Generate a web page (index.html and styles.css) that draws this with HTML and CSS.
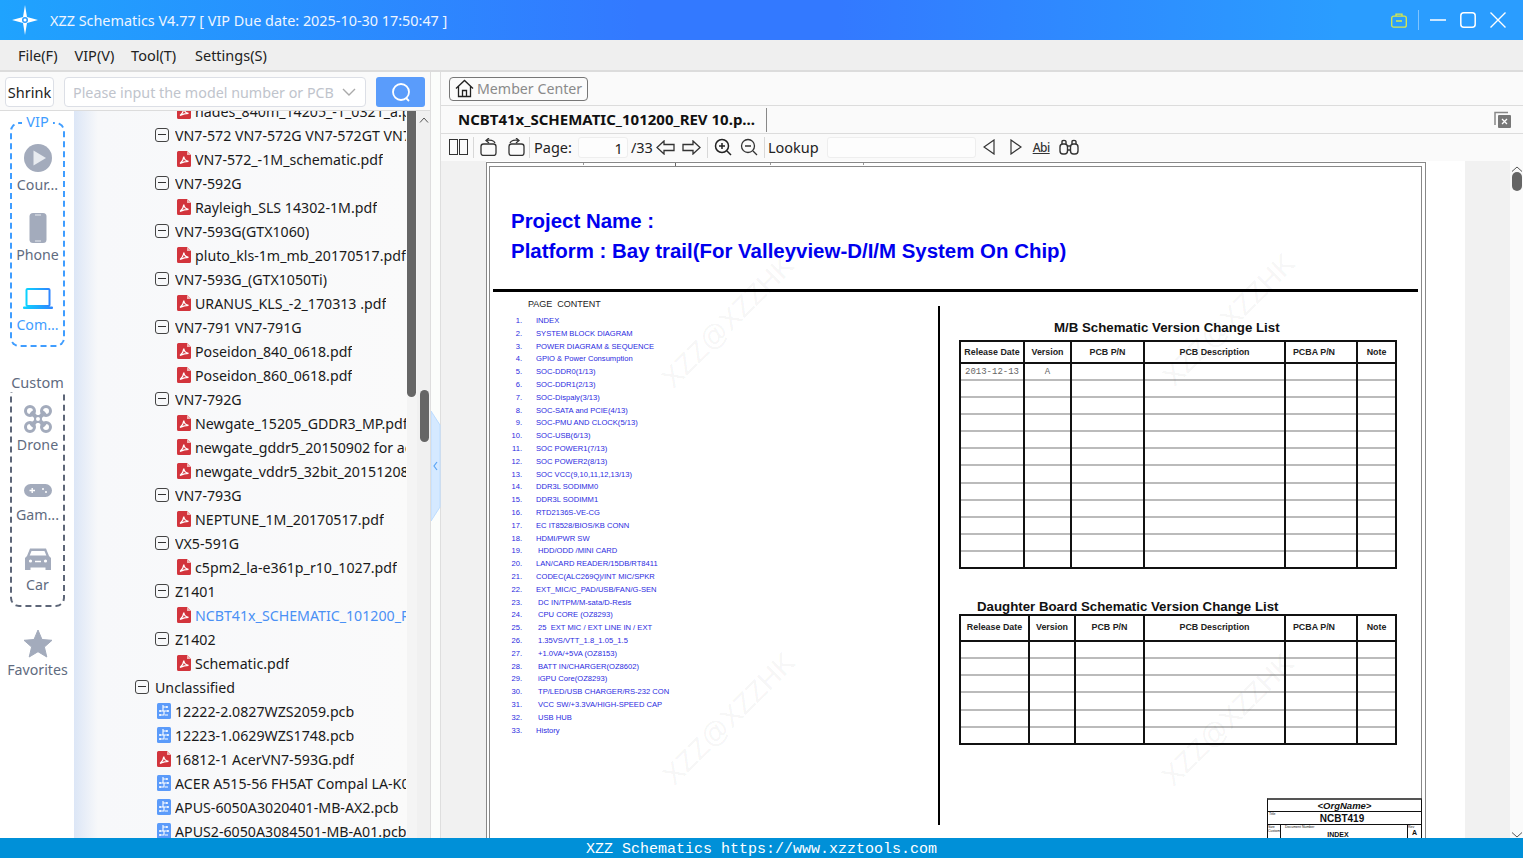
FILE: index.html
```html
<!DOCTYPE html>
<html lang="en">
<head>
<meta charset="utf-8">
<title>XZZ Schematics</title>
<link rel="stylesheet" href="styles.css">
</head>
<body>
<svg class="defs" width="0" height="0" aria-hidden="true">
  <symbol id="pdf" viewBox="0 0 14 16">
    <path d="M1.5 0H10L14 4V14.5A1.5 1.5 0 0 1 12.500 16H1.500A1.500 1.500 0 0 1 0 14.500V1.500A1.500 1.500 0 0 1 1.500 0Z" fill="#d2343c"/>
    <path d="M10 0V4H14Z" fill="#f2b5b5"/>
    <path d="M3 12.500C5 11 6.500 8 6.800 5.500C7.200 8.500 9 10 11.500 10.300C9 10.300 6 11 3 12.500Z" fill="none" stroke="#fff" stroke-width="1.200"/>
  </symbol>
  <symbol id="pcb" viewBox="0 0 14 16">
    <rect width="14" height="16" rx="1.500" fill="#5b9bfa"/>
    <path d="M3 8H6V4H10M3 12H7V8H11M8 12H11M6 4V2" fill="none" stroke="#fff" stroke-width="1.100"/>
    <circle cx="3" cy="8" r="1" fill="#fff"/><circle cx="11" cy="8" r="1" fill="#fff"/><circle cx="10" cy="4" r="1" fill="#fff"/><circle cx="3" cy="12" r="1" fill="#fff"/>
  </symbol>
</svg>
<div class="app">
  <header class="titlebar">
    <svg class="logo" width="26" height="30" viewBox="0 0 26 30"><path d="M13 0L15 12L26 15L15 18L13 30L11 18L0 15L11 12Z" fill="#fff"/><circle cx="13" cy="15" r="3" fill="#2b9dff"/><circle cx="13" cy="15" r="1.500" fill="#fff"/></svg>
    <div class="app-title">XZZ Schematics V4.77 [ VIP Due date: 2025-10-30 17:50:47 ]</div>
    <div class="win-controls">
      <svg width="16" height="15" viewBox="0 0 16 15" fill="none" stroke="#d9e84a" stroke-width="1.300"><rect x=".7" y="3.200" width="14.600" height="11" rx="2"/><path d="M5 3V1.200H11V3M5 8H11"/></svg>
      <span class="win-sep"></span>
      <svg class="win-min" width="16" height="16" viewBox="0 0 16 16"><path d="M0 8H16" stroke="#fff" stroke-width="1.500"/></svg>
      <svg width="16" height="16" viewBox="0 0 16 16" fill="none"><rect x=".8" y=".8" width="14.400" height="14.400" rx="3" stroke="#fff" stroke-width="1.500"/></svg>
      <svg width="16" height="16" viewBox="0 0 16 16"><path d="M.5 .5L15.500 15.500M15.500 .5L.5 15.500" stroke="#fff" stroke-width="1.400"/></svg>
    </div>
  </header>
  <nav class="menubar">
    <span>File(F)</span><span>VIP(V)</span><span>Tool(T)</span><span class="menu-last">Settings(S)</span>
  </nav>
  <main class="workspace">
    <section class="left-panel">
      <div class="search-row">
        <button class="shrink">Shrink</button>
        <div class="search-input"><span>Please input the model number or PCB</span>
          <svg width="14" height="8" viewBox="0 0 14 8" fill="none"><path d="M1 1L7 7L13 1" stroke="#aaa" stroke-width="1.400"/></svg>
        </div>
        <button class="search-btn"><svg width="20" height="20" viewBox="0 0 20 20" fill="none" stroke="#fff" stroke-width="1.800"><circle cx="10" cy="10" r="8"/><path d="M15 16L18 19"/></svg></button>
      </div>
      <div class="left-body">
        <aside class="rail">
          <div class="group group-vip">
            <div class="group-label">VIP</div>
            <div class="rail-item"><svg width="30" height="30" viewBox="0 0 30 30"><circle cx="15" cy="15" r="14" fill="#a3abbc"/><path d="M10.500 7.500L23 15L10.500 22.500Z" fill="#e8ebf0"/></svg><span>Cour...</span></div>
            <div class="rail-item"><svg width="30" height="30" viewBox="0 0 30 30"><rect x="6.500" y="0" width="17" height="30" rx="3.500" fill="#a3abbc"/><path d="M12 2H18M12 28H18" stroke="#e8ebf0"/></svg><span>Phone</span></div>
            <div class="rail-item active"><svg width="30" height="30" viewBox="0 0 30 30" fill="none"><defs><linearGradient id="lap" x1="0" x2="1"><stop offset="0" stop-color="#0cd2ff"/><stop offset="1" stop-color="#2f86ff"/></linearGradient></defs><rect x="3.500" y="6" width="23" height="17" rx="1" stroke="url(#lap)" stroke-width="2"/><rect x="0" y="23.500" width="30" height="2.500" rx="1" fill="url(#lap)"/></svg><span>Com...</span></div>
          </div>
          <div class="group group-custom">
            <div class="group-label">Custom</div>
            <div class="rail-item"><svg width="30" height="30" viewBox="0 0 30 30" fill="none" stroke="#a3abbc"><path d="M8 8L22 22M22 8L8 22" stroke-width="4"/><circle cx="7" cy="7" r="4.500" stroke-width="3"/><circle cx="23" cy="7" r="4.500" stroke-width="3"/><circle cx="7" cy="23" r="4.500" stroke-width="3"/><circle cx="23" cy="23" r="4.500" stroke-width="3"/><circle cx="15" cy="15" r="3" fill="#fff" stroke-width="2"/></svg><span>Drone</span></div>
            <div class="rail-item"><svg width="30" height="30" viewBox="0 0 30 30"><rect x="1" y="10" width="28" height="13" rx="6.500" fill="#a3abbc"/><path d="M6.500 16.500H12M9.200 14V19" stroke="#fff" stroke-width="1.400"/><circle cx="20" cy="15" r="1" fill="#fff"/><circle cx="23" cy="18" r="1" fill="#fff"/></svg><span>Gam...</span></div>
            <div class="rail-item"><svg width="30" height="30" viewBox="0 0 30 30"><path d="M7 4.500H23L26 12L28 14V26H22.500V23.500H7.500V26H2V14L4 12Z" fill="#a3abbc"/><path d="M8.500 7H21.500L23.300 11.500H6.700Z" fill="#fff"/><circle cx="7.500" cy="17" r="1.600" fill="#fff"/><circle cx="22.500" cy="17" r="1.600" fill="#fff"/><path d="M12 17.500H18" stroke="#fff" stroke-width="1.500"/></svg><span>Car</span></div>
          </div>
          <div class="rail-item favorites"><svg width="30" height="30" viewBox="0 0 30 30"><path d="M15 1L19 10.500L29 11.300L21.400 18L23.800 28L15 22.700L6.200 28L8.600 18L1 11.300L11 10.500Z" fill="#a3abbc" stroke="#a3abbc" stroke-linejoin="round"/></svg><span>Favorites</span></div>
        </aside>
        <div class="tree">
          <div class="tree-list">
            <div class="row l2"><svg class="file"><use href="#pdf"/></svg><span>hades_840m_14205_-1_0321_a.pdf</span></div>
            <div class="row l1"><i class="box"></i><span>VN7-572 VN7-572G VN7-572GT VN7-572TG</span></div>
            <div class="row l2"><svg class="file"><use href="#pdf"/></svg><span>VN7-572_-1M_schematic.pdf</span></div>
            <div class="row l1"><i class="box"></i><span>VN7-592G</span></div>
            <div class="row l2"><svg class="file"><use href="#pdf"/></svg><span>Rayleigh_SLS 14302-1M.pdf</span></div>
            <div class="row l1"><i class="box"></i><span>VN7-593G(GTX1060)</span></div>
            <div class="row l2"><svg class="file"><use href="#pdf"/></svg><span>pluto_kls-1m_mb_20170517.pdf</span></div>
            <div class="row l1"><i class="box"></i><span>VN7-593G_(GTX1050Ti)</span></div>
            <div class="row l2"><svg class="file"><use href="#pdf"/></svg><span>URANUS_KLS_-2_170313 .pdf</span></div>
            <div class="row l1"><i class="box"></i><span>VN7-791 VN7-791G</span></div>
            <div class="row l2"><svg class="file"><use href="#pdf"/></svg><span>Poseidon_840_0618.pdf</span></div>
            <div class="row l2"><svg class="file"><use href="#pdf"/></svg><span>Poseidon_860_0618.pdf</span></div>
            <div class="row l1"><i class="box"></i><span>VN7-792G</span></div>
            <div class="row l2"><svg class="file"><use href="#pdf"/></svg><span>Newgate_15205_GDDR3_MP.pdf</span></div>
            <div class="row l2"><svg class="file"><use href="#pdf"/></svg><span>newgate_gddr5_20150902 for acer.pdf</span></div>
            <div class="row l2"><svg class="file"><use href="#pdf"/></svg><span>newgate_vddr5_32bit_20151208.pdf</span></div>
            <div class="row l1"><i class="box"></i><span>VN7-793G</span></div>
            <div class="row l2"><svg class="file"><use href="#pdf"/></svg><span>NEPTUNE_1M_20170517.pdf</span></div>
            <div class="row l1"><i class="box"></i><span>VX5-591G</span></div>
            <div class="row l2"><svg class="file"><use href="#pdf"/></svg><span>c5pm2_la-e361p_r10_1027.pdf</span></div>
            <div class="row l1"><i class="box"></i><span>Z1401</span></div>
            <div class="row l2 selected"><svg class="file"><use href="#pdf"/></svg><span>NCBT41x_SCHEMATIC_101200_REV 10.pdf</span></div>
            <div class="row l1"><i class="box"></i><span>Z1402</span></div>
            <div class="row l2"><svg class="file"><use href="#pdf"/></svg><span>Schematic.pdf</span></div>
            <div class="row l0"><i class="box"></i><span>Unclassified</span></div>
            <div class="row l1f"><svg class="file"><use href="#pcb"/></svg><span>12222-2.0827WZS2059.pcb</span></div>
            <div class="row l1f"><svg class="file"><use href="#pcb"/></svg><span>12223-1.0629WZS1748.pcb</span></div>
            <div class="row l1f"><svg class="file"><use href="#pdf"/></svg><span>16812-1 AcerVN7-593G.pdf</span></div>
            <div class="row l1f"><svg class="file"><use href="#pcb"/></svg><span>ACER A515-56 FH5AT Compal LA-K091P.pcb</span></div>
            <div class="row l1f"><svg class="file"><use href="#pcb"/></svg><span>APUS-6050A3020401-MB-AX2.pcb</span></div>
            <div class="row l1f"><svg class="file"><use href="#pcb"/></svg><span>APUS2-6050A3084501-MB-A01.pcb</span></div>
          </div>
        </div>
        <div class="tree-bar"><div class="tree-thumb"></div></div>
        <div class="outer-bar">
          <svg class="chev" width="10" height="6" viewBox="0 0 10 6" fill="none"><path d="M1 5.500L5 1L9 5.500" stroke="#555"/></svg>
          <div class="outer-thumb"></div>
        </div>
      </div>
    </section>
    <div class="splitter">
      <svg width="10" height="110" viewBox="0 0 10 110"><path d="M0 0L9 14V96L0 110Z" fill="#d5e9ff" stroke="#bcdcff"/><path d="M6 51L3 55L6 59" fill="none" stroke="#5aa5f5" stroke-width="1.200"/></svg>
    </div>
    <section class="right-panel">
      <div class="member-row">
        <button class="member">
          <svg width="19" height="19" viewBox="0 0 19 19" fill="none" stroke="#222" stroke-width="1.300"><path d="M1 9.500L9.500 1.500L18 9.500M3.500 7.500V17.500H15.500V7.500M7.500 17.500V11.500H11.500V17.500"/></svg>
          <span>Member Center</span>
        </button>
      </div>
      <div class="tab-row">
        <div class="tab">NCBT41x_SCHEMATIC_101200_REV 10.p...</div>
        <svg class="close-all" width="18" height="18" viewBox="0 0 18 18"><path d="M1 14V1.500H14" fill="none" stroke="#888" stroke-width="1.500"/><rect x="4" y="4" width="13" height="13" rx="1" fill="#777"/><path d="M8 8L13 13M13 8L8 13" stroke="#fff" stroke-width="1.300"/></svg>
      </div>
      <div class="toolbar">
        <svg class="t-split" width="19" height="16" viewBox="0 0 19 16" fill="none" stroke="#333"><rect x=".5" y=".5" width="8" height="15"/><rect x="10.500" y=".5" width="8" height="15"/></svg>
        <i class="t-sep"></i>
        <svg class="t-rot" width="18" height="18" viewBox="0 0 18 18" fill="none" stroke="#333" stroke-width="1.300"><rect x="1" y="6" width="15" height="11.500" rx="2.500"/><path d="M15 5C14 2.500 10 1.500 6.500 2.500M9 0L6 2.500L9 5"/></svg>
        <svg class="t-rot2" width="19" height="18" viewBox="0 0 19 18" fill="none" stroke="#333" stroke-width="1.300"><rect x="3" y="6" width="15" height="11.500" rx="2.500"/><path d="M4 5C5 2.500 9 1.500 12.500 2.500M10 0L13 2.500L10 5"/></svg>
        <i class="t-sep"></i>
        <span class="t-label t-page">Page:</span>
        <div class="page-input">1</div>
        <span class="t-label t-total">/33</span>
        <svg class="t-arrow" width="19" height="15" viewBox="0 0 19 15" fill="none" stroke="#333" stroke-width="1.300"><path d="M8 1L1 7.500L8 14V10.500H18V4.500H8Z"/></svg>
        <svg class="t-arrow2" width="19" height="15" viewBox="0 0 19 15" fill="none" stroke="#333" stroke-width="1.300"><path d="M11 1L18 7.500L11 14V10.500H1V4.500H11Z"/></svg>
        <i class="t-sep"></i>
        <svg class="t-zoom" width="18" height="18" viewBox="0 0 18 18" fill="none" stroke="#222" stroke-width="1.500"><circle cx="8" cy="8" r="6.500"/><path d="M13 13L17 17M5 8H11M8 5V11"/></svg>
        <svg class="t-zoom2" width="18" height="18" viewBox="0 0 18 18" fill="none" stroke="#333" stroke-width="1.300"><circle cx="8" cy="8" r="6.500"/><path d="M13 13L17 17M5 8H11"/></svg>
        <i class="t-sep"></i>
        <span class="t-label t-lookup">Lookup</span>
        <div class="lookup-input"></div>
        <svg class="t-tri" width="12" height="16" viewBox="0 0 12 16" fill="none" stroke="#333" stroke-width="1.200"><path d="M11 1V15L1 8Z"/></svg>
        <svg class="t-tri2" width="12" height="16" viewBox="0 0 12 16" fill="none" stroke="#333" stroke-width="1.200"><path d="M1 1V15L11 8Z"/></svg>
        <span class="t-abi">Abi</span>
        <svg width="20" height="16" viewBox="0 0 20 16" fill="none" stroke="#333" stroke-width="1.400"><rect x="1" y="5" width="7.500" height="10" rx="3"/><rect x="11.500" y="5" width="7.500" height="10" rx="3"/><path d="M3 5V2.500C3 1 7 1 7 2.500V5M13 5V2.500C13 1 17 1 17 2.500V5M8.500 7H11.500M8.500 11H11.500"/></svg>
      </div>
      <div class="viewer">
        <article class="page">
          <div class="frame-outer">
            <div class="frame-inner">
              <h1 class="sheet-title">Project Name :<br>Platform : Bay trail(For Valleyview-D/I/M System On Chip)</h1>
              <div class="sheet-rule"></div>
              <div class="sheet-body">
                <div class="toc">
                  <div class="toc-head">PAGE&nbsp;&nbsp;CONTENT</div>
                  <ol class="toc-list">
                    <li>INDEX</li><li>SYSTEM BLOCK DIAGRAM</li><li>POWER DIAGRAM &amp; SEQUENCE</li><li>GPIO &amp; Power Consumption</li><li>SOC-DDR0(1/13)</li><li>SOC-DDR1(2/13)</li><li>SOC-Dispaly(3/13)</li><li>SOC-SATA and PCIE(4/13)</li><li>SOC-PMU AND CLOCK(5/13)</li><li>SOC-USB(6/13)</li><li>SOC POWER1(7/13)</li><li>SOC POWER2(8/13)</li><li>SOC VCC(9,10,11,12,13/13)</li><li>DDR3L SODIMM0</li><li>DDR3L SODIMM1</li><li>RTD2136S-VE-CG</li><li>EC IT8528/BIOS/KB CONN</li><li>HDMI/PWR SW</li><li class="in">HDD/ODD /MINI CARD</li><li>LAN/CARD READER/15DB/RT8411</li><li>CODEC(ALC269Q)/INT MIC/SPKR</li><li>EXT_MIC/C_PAD/USB/FAN/G-SEN</li><li class="in">DC IN/TPM/M-sata/D-Resis</li><li class="in">CPU CORE (OZ8293)</li><li class="in">25&nbsp; EXT MIC / EXT LINE IN / EXT</li><li class="in">1.35VS/VTT_1.8_1.05_1.5</li><li class="in">+1.0VA/+5VA (OZ8153)</li><li class="in">BATT IN/CHARGER(OZ8602)</li><li class="in">iGPU Core(OZ8293)</li><li class="in">TP/LED/USB CHARGER/RS-232 CON</li><li class="in">VCC SW/+3.3VA/HIGH-SPEED CAP</li><li class="in">USB HUB</li><li>History</li>
                  </ol>
                </div>
                <div class="sheet-divider"></div>
                <div class="versions">
                  <h2 class="ver-title first">M/B Schematic Version Change List</h2>
                  <table class="ver-table mb">
                    <colgroup><col class="c1"><col class="c2"><col class="c3"><col class="c4"><col class="c5"><col class="c6"></colgroup>
                    <thead><tr><th>Release Date</th><th>Version</th><th>PCB P/N</th><th>PCB Description</th><th class="pcba">PCBA P/N</th><th>Note</th></tr></thead>
                    <tbody>
                      <tr><td class="typed">2013-12-13</td><td class="typed">A</td><td></td><td></td><td></td><td></td></tr>
                      <tr><td></td><td></td><td></td><td></td><td></td><td></td></tr>
                      <tr><td></td><td></td><td></td><td></td><td></td><td></td></tr>
                      <tr><td></td><td></td><td></td><td></td><td></td><td></td></tr>
                      <tr><td></td><td></td><td></td><td></td><td></td><td></td></tr>
                      <tr><td></td><td></td><td></td><td></td><td></td><td></td></tr>
                      <tr><td></td><td></td><td></td><td></td><td></td><td></td></tr>
                      <tr><td></td><td></td><td></td><td></td><td></td><td></td></tr>
                      <tr><td></td><td></td><td></td><td></td><td></td><td></td></tr>
                      <tr><td></td><td></td><td></td><td></td><td></td><td></td></tr>
                      <tr><td></td><td></td><td></td><td></td><td></td><td></td></tr>
                      <tr><td></td><td></td><td></td><td></td><td></td><td></td></tr>
                    </tbody>
                  </table>
                  <h2 class="ver-title second">Daughter Board Schematic Version Change List</h2>
                  <table class="ver-table db">
                    <colgroup><col class="d1"><col class="d2"><col class="d3"><col class="c4"><col class="c5"><col class="c6"></colgroup>
                    <thead><tr><th>Release Date</th><th>Version</th><th>PCB P/N</th><th>PCB Description</th><th class="pcba">PCBA P/N</th><th>Note</th></tr></thead>
                    <tbody>
                      <tr><td></td><td></td><td></td><td></td><td></td><td></td></tr>
                      <tr><td></td><td></td><td></td><td></td><td></td><td></td></tr>
                      <tr><td></td><td></td><td></td><td></td><td></td><td></td></tr>
                      <tr><td></td><td></td><td></td><td></td><td></td><td></td></tr>
                      <tr><td></td><td></td><td></td><td></td><td></td><td></td></tr>
                      <tr><td></td><td></td><td></td><td></td><td></td><td></td></tr>
                    </tbody>
                  </table>
                  <div class="title-block">
                    <div class="tb-org">&lt;OrgName&gt;</div>
                    <div class="tb-title"><small>Title</small><b>NCBT419</b></div>
                    <div class="tb-doc">
                      <div class="tb-size"><small>Size<br>Custom</small></div>
                      <div class="tb-num"><small>Document Number</small><b>INDEX</b></div>
                      <div class="tb-rev"><small>Rev</small><b>A</b></div>
                    </div>
                  </div>
                </div>
              </div>
            </div>
          </div>
          <div class="wm wm1">XZZ@XZZHK</div>
          <div class="wm wm2">XZZ@XZZHK</div>
          <div class="wm wm3">XZZ@XZZHK</div>
          <div class="wm wm4">XZZ@XZZHK</div>
        </article>
        <div class="viewer-gap"></div>
        <div class="viewer-bar">
          <svg class="chev" width="12" height="6" viewBox="0 0 12 6" fill="none"><path d="M1 5.500L6 1L11 5.500" stroke="#555"/></svg>
          <div class="viewer-thumb"></div>
          <svg class="chev-down" width="12" height="6" viewBox="0 0 12 6" fill="none"><path d="M1 .5L6 5L11 .5" stroke="#555"/></svg>
        </div>
      </div>
    </section>
  </main>
  <footer class="statusbar">XZZ Schematics https://www.xzztools.com</footer>
</div>
</body>
</html>
```
FILE: styles.css
```css
* { box-sizing: border-box; }
html, body { margin: 0; padding: 0; height: 100%; overflow: hidden; }
body { font-family: "Noto Sans", "Liberation Sans", sans-serif; font-size: 15px; color: #222; background: #fff; }
.defs { position: absolute; }
.app { width: 1523px; height: 858px; display: flex; flex-direction: column; overflow: hidden; }

/* title bar */
.titlebar { height: 40px; flex: none; display: flex; align-items: center; padding: 0 17px 0 12px; color: #fff; background: linear-gradient(90deg, #1fa3fe 0, #3379ff 42%, #3379ff 55%, #2a9dff 88%, #2a9dff 100%); }
.logo { flex: none; }
.app-title { margin-left: 12px; font-size: 14.4px; white-space: nowrap; color: #eef5ff; }
.win-controls { margin-left: auto; display: flex; align-items: center; }
.win-controls svg { display: block; margin-left: 14px; }
.win-sep { width: 1px; height: 20px; background: #7fc4ff; margin: 0 -2px 0 11px; }
.win-controls .win-min { margin-left: 13px; }

/* menu */
.menubar { height: 32px; flex: none; display: flex; gap: 16.8px; align-items: center; padding-left: 18px; background: #efefef; border-bottom: 2px solid #dcdcdc; font-size: 14.5px; color: #222; }
.menu-last { margin-left: 2px; }

.workspace { flex: 1; min-height: 0; display: flex; }

/* left panel */
.left-panel { width: 431px; flex: none; display: flex; flex-direction: column; border-right: 1px solid #dedede; background: #fafafa; }
.search-row { height: 39px; flex: none; display: flex; align-items: flex-start; padding: 5px 0 0 5px; border-bottom: 1px solid #dcdcdc; background: #fafafa; }
.shrink { width: 49px; height: 30px; padding: 0; border: 1px solid #dcdfe6; border-radius: 4px; background: #fff; font: inherit; font-size: 14.5px; color: #222; }
.search-input { width: 302px; height: 30px; margin-left: 10px; padding: 0 9px 0 8px; display: flex; align-items: center; justify-content: space-between; border: 1px solid #dcdfe6; border-radius: 4px; background: #fff; color: #c0c4cc; font-size: 14.3px; white-space: nowrap; overflow: hidden; }
.search-btn { width: 49px; height: 30px; margin-left: 10px; padding: 0; border: 0; border-radius: 3px; background: #5a9cfb; display: flex; align-items: center; justify-content: center; }
.left-body { flex: 1; min-height: 0; display: flex; }

.rail { width: 74px; flex: none; background: #fff; padding: 11px 0 0 10px; color: #5f6b80; font-size: 14.2px; }
.group { width: 55px; border: 2px dashed; border-radius: 9px; text-align: center; }
.group-vip { height: 225px; border-color: #3f9dff; color: #3f9dff; }
.group-custom { height: 222px; margin-top: 38px; border-color: #5d6678; }
.group-label { height: 20px; line-height: 20px; white-space: nowrap; }
.group-vip .group-label { margin: -13px 10px 10px; background: #fff; color: #3f9dff; font-size: 14.5px; }
.group-custom .group-label { margin: -15px -2px 12px; background: #fff; font-size: 14.5px; }
.rail-item { height: 70px; width: 51px; display: flex; flex-direction: column; align-items: center; white-space: nowrap; color: #5f6b80; }
.rail-item svg { flex: none; display: block; }
.rail-item span { line-height: 22px; }
.group-vip .rail-item { padding-top: 2px; }
.group-vip .rail-item span { margin-top: 1px; }
.rail-item.active span { color: #3f9dff; }
.favorites { width: 55px; margin-top: 22px; }

.tree { width: 333px; flex: none; overflow: hidden; background: linear-gradient(90deg, #dce6f6 0, #f7f8fa 24px, #fafafa 100%); }
.tree-list { margin-top: -12px; }
.row { height: 24px; display: flex; align-items: center; white-space: nowrap; padding-right: 1px; font-size: 14.2px; color: #1a1a1a; }
.row span { min-width: 0; overflow: hidden; }
.l0 { padding-left: 61px; }
.l1 { padding-left: 81px; }
.l2 { padding-left: 103px; }
.l1f { padding-left: 83px; }
.box { flex: none; width: 14px; height: 14px; margin-right: 6px; border: 1px solid #444; border-radius: 3px; position: relative; }
.box::after { content: ""; position: absolute; left: 2px; right: 2px; top: 5px; height: 1px; background: #333; }
.file { flex: none; width: 14px; height: 16px; margin-right: 4px; }
.selected { color: #4a90f5; }

.tree-bar { width: 10px; flex: none; background: #f4f4f4; }
.tree-thumb { width: 9px; height: 286px; background: #666; border-radius: 0 0 5px 5px; }
.outer-bar { width: 13px; flex: none; background: #f0f0f0; padding-left: 3px; position: relative; }
.outer-bar .chev { display: block; margin: 6px 0 0 -1px; }
.outer-thumb { width: 9px; height: 52px; margin-top: 267px; background: #666; border-radius: 5px; }

/* splitter */
.splitter { width: 10px; flex: none; background: #fbfdfb; padding-top: 339px; border-right: 1px solid #dedede; }
.splitter svg { display: block; }

/* right */
.right-panel { flex: 1; min-width: 0; display: flex; flex-direction: column; background: #fafafa; }
.member-row { height: 34px; flex: none; padding: 5px 0 0 8px; border-bottom: 1px solid #dcdcdc; }
.member { width: 139px; height: 24px; padding: 0 0 2px 5px; display: flex; align-items: center; gap: 3px; border: 1px solid #777; border-radius: 4px; background: #fbfbfb; font: inherit; font-size: 14.2px; color: #8a8a8a; }
.tab-row { height: 28px; flex: none; display: flex; align-items: center; justify-content: space-between; padding: 0 11px 0 0; border-bottom: 1px solid #dcdcdc; }
.tab { width: 326px; height: 24px; line-height: 22px; padding-left: 17px; font-weight: 700; font-size: 15px; color: #111; border-right: 1px solid #888; white-space: nowrap; }
.toolbar { height: 27px; flex: none; display: flex; align-items: center; padding: 0 0 1px 8px; font-size: 14.5px; }
.toolbar svg { flex: none; display: block; }
.t-sep { width: 1px; height: 21px; background: #d8d8d8; flex: none; }
.t-split { margin-right: 5px; }
.t-rot { margin-left: 6px; }
.toolbar .t-rot2 { margin: 0 4px 0 8px; }
.t-page { margin-left: 4px; }
.page-input { width: 50px; height: 21px; margin-left: 6px; padding-right: 4px; text-align: right; line-height: 21px; background: #fdfdfd; border: 1px solid #eee; border-radius: 3px; }
.t-total { margin-left: 3px; }
.toolbar .t-arrow { margin-left: 3px; }
.toolbar .t-arrow2 { margin: 0 6px 0 7px; }
.toolbar .t-zoom { margin-left: 6px; }
.toolbar .t-zoom2 { margin: 0 6px 0 8px; }
.t-lookup { margin-left: 3px; }
.lookup-input { width: 149px; height: 21px; margin-left: 8px; background: #fdfdfd; border: 1px solid #eee; border-radius: 3px; }
.toolbar .t-tri { margin-left: 7px; }
.toolbar .t-tri2 { margin-left: 15px; }
.t-abi { margin: 0 9px 0 11px; font-size: 12px; font-weight: 500; text-decoration: underline; letter-spacing: -.5px; color: #333; }

/* viewer */
.viewer { flex: 1; min-height: 0; display: flex; background: #f1f1f1; padding-left: 45px; }
.page { width: 979px; height: 100%; flex: none; position: relative; overflow: hidden; background: #fff; padding-top: 1px; }
.frame-outer { width: 940px; height: 690px; padding: 3px 3px 0 2px; border: 1px solid #888; border-bottom: 0;
  background:
    linear-gradient(#999, #999) 96px 0 / 1px 2px no-repeat,
    linear-gradient(#666, #666) 188px 0 / 1px 3px no-repeat,
    linear-gradient(#999, #999) 283px 0 / 1px 2px no-repeat,
    linear-gradient(#999, #999) 376px 0 / 1px 2px no-repeat; }
.frame-inner { height: 100%; border: 1px solid #888; border-bottom: 0; font-family: "Liberation Sans", sans-serif; }
.sheet-title { margin: 0; padding: 39px 0 0 21px; font-size: 20.45px; line-height: 30px; font-weight: 700; color: #0000ee; }
.sheet-rule { height: 3px; margin: 23px 3px 0; background: #000; }
.sheet-body { display: flex; }
.toc { width: 448px; flex: none; padding: 6px 0 0 38px; }
.toc-head { font-size: 9px; line-height: 12px; color: #222; }
.toc-list { margin: 5px 0 0 -38px; padding: 0; list-style: none; counter-reset: toc; }
.toc-list li { counter-increment: toc; height: 12.81px; line-height: 12.81px; padding-left: 46px; position: relative; font-size: 7.6px; color: #2a2ae0; white-space: nowrap; }
.toc-list li::before { content: counter(toc) "."; position: absolute; left: 0; width: 32px; text-align: right; color: #2a2ae0; }
.toc-list li.in { padding-left: 48px; }
.sheet-divider { width: 2px; height: 519px; margin-top: 14px; background: #000; flex: none; }
.versions { flex: 1; min-width: 0; padding: 28px 0 0 19px; }
.ver-title { margin: 0; font-size: 13.27px; line-height: 16px; font-weight: 700; color: #111; white-space: nowrap; }
.ver-title.first { padding-left: 95px; margin-bottom: 4px; }
.ver-title.second { padding-left: 18px; margin-top: 30px; margin-bottom: -1px; }
.ver-table { width: 436px; table-layout: fixed; border-collapse: collapse; border: 2px solid #111; }
.ver-table th { font-size: 8.9px; font-weight: 700; color: #222; border: 2px solid #111; padding: 0 0 1px; white-space: nowrap; }
.ver-table th.pcba { padding-right: 14px; }
.ver-table td { padding: 0; border-left: 2px solid #111; border-right: 2px solid #111; border-top: 2px solid #bbb; text-align: center; font-family: "Liberation Mono", monospace; font-size: 9px; color: #666; }
.ver-table.mb { height: 227px; }
.ver-table.mb th { height: 22px; }
.ver-table.mb td { height: 17.08px; }
.ver-table.db { height: 129px; }
.ver-table.db th { height: 26px; }
.ver-table.db td { height: 17.16px; }
.c1 { width: 64px; } .c2 { width: 47px; } .c3 { width: 73px; } .c4 { width: 141px; } .c5 { width: 72px; } .c6 { width: 39px; }
.d1 { width: 69px; } .d2 { width: 46px; } .d3 { width: 69px; }
.title-block { width: 155px; margin: 53px 0 0 308px; border: 1px solid #111; border-top: 2px solid #555; color: #111; }
.tb-org { height: 12px; line-height: 12px; text-align: center; font-size: 9.5px; font-weight: 700; font-style: italic; border-bottom: 1px solid #111; }
.tb-title { height: 13px; padding-right: 5px; position: relative; text-align: center; line-height: 13px; font-size: 10px; border-bottom: 1px solid #111; }
.title-block small { font-size: 3.5px; line-height: 4px; display: block; text-align: left; font-weight: 400; }
.tb-title small { position: absolute; left: 1px; top: 0; }
.tb-doc { height: 14px; display: flex; font-size: 7px; }
.tb-size { width: 13px; border-right: 1px solid #111; }
.tb-num { flex: 1; padding: 0 12px 0 0; text-align: center; border-right: 1px solid #111; }
.tb-num small { padding-left: 4px; }
.tb-num b { display: block; line-height: 8px; margin-top: 2px; }
.tb-rev { width: 13px; }
.tb-rev b { display: block; text-align: center; line-height: 8px; }
.wm { position: absolute; width: 200px; text-align: center; font-family: "Liberation Sans", sans-serif; font-size: 28px; line-height: 36px; color: rgba(0, 0, 0, .055); transform: rotate(-45deg); white-space: nowrap; pointer-events: none; }
.wm1 { left: 142px; top: 143px; }
.wm2 { left: 643px; top: 141px; }
.wm3 { left: 143px; top: 540px; }
.wm4 { left: 642px; top: 541px; }
.viewer-gap { flex: 1; }
.viewer-bar { width: 13px; flex: none; background: #fafafa; padding: 5px 0 0 1px; display: flex; flex-direction: column; position: relative; }
.viewer-thumb { width: 10px; height: 19px; margin: 0 0 0 1px; background: #666; border-radius: 5px; }
.chev-down { margin-top: auto; }

/* footer */
.statusbar { height: 20px; flex: none; overflow: hidden; line-height: 24px; text-align: center; font-family: "Liberation Mono", monospace; font-size: 15px; color: #fff; background: #0090d8; }
```
